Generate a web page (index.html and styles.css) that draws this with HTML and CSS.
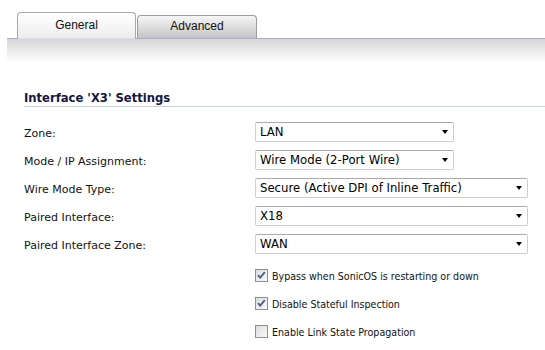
FILE: index.html
```html
<!DOCTYPE html>
<html>
<head>
<meta charset="utf-8">
<link rel="stylesheet" href="styles.css">
</head>
<body>
<div class="tabbar">
  <div class="tab active">General</div>
  <div class="tab">Advanced</div>
</div>
<div class="band"></div>
<div class="section">
  <div class="heading">Interface 'X3' Settings</div>
  <div class="form">
    <div class="label">Zone:</div>
    <div class="select narrow"><span>LAN</span><i class="arrow"></i></div>
    <div class="label">Mode / IP Assignment:</div>
    <div class="select narrow"><span>Wire Mode (2-Port Wire)</span><i class="arrow"></i></div>
    <div class="label">Wire Mode Type:</div>
    <div class="select wide"><span>Secure (Active DPI of Inline Traffic)</span><i class="arrow"></i></div>
    <div class="label">Paired Interface:</div>
    <div class="select wide"><span>X18</span><i class="arrow"></i></div>
    <div class="label">Paired Interface Zone:</div>
    <div class="select wide"><span>WAN</span><i class="arrow"></i></div>
  </div>
  <div class="checks">
    <label class="check">
      <svg class="box" width="13" height="13" viewBox="0 0 13 13"><defs><linearGradient id="g" x1="0" y1="0" x2="1" y2="1"><stop offset="0" stop-color="#dcdcdc"/><stop offset="1" stop-color="#fbfbfb"/></linearGradient></defs><rect x="0.5" y="0.5" width="12" height="12" fill="url(#g)" stroke="#8e8f8f"/><path d="M3 6.2 L5.2 8.6 L9.8 3.2" fill="none" stroke="#4d5a8c" stroke-width="1.8"/></svg>
      <span>Bypass when SonicOS is restarting or down</span>
    </label>
    <label class="check">
      <svg class="box" width="13" height="13" viewBox="0 0 13 13"><rect x="0.5" y="0.5" width="12" height="12" fill="url(#g)" stroke="#8e8f8f"/><path d="M3 6.2 L5.2 8.6 L9.8 3.2" fill="none" stroke="#4d5a8c" stroke-width="1.8"/></svg>
      <span>Disable Stateful Inspection</span>
    </label>
    <label class="check">
      <svg class="box" width="13" height="13" viewBox="0 0 13 13"><rect x="0.5" y="0.5" width="12" height="12" fill="url(#g)" stroke="#8e8f8f"/></svg>
      <span>Enable Link State Propagation</span>
    </label>
  </div>
</div>
</body>
</html>
```
FILE: styles.css
```css
html, body {
  margin: 0;
  padding: 0;
  background: #fff;
}
body {
  font-family: "DejaVu Sans", Verdana, sans-serif;
  font-size: 11px;
  color: #000;
  width: 545px;
  overflow: hidden;
}
.tabbar {
  display: flex;
  align-items: flex-end;
  margin-left: 7px;
  padding-left: 10px;
  padding-top: 12px;
  height: 26px;
  border-bottom: 1px solid #b2acc6;
}
.tab {
  box-sizing: border-box;
  font-family: "Liberation Sans", Arial, sans-serif;
  font-size: 12px;
  text-align: center;
  border: 1px solid #9d9d9d;
  border-bottom: none;
  border-radius: 4px 4px 0 0;
  width: 120px;
  height: 23px;
  line-height: 20px;
  margin-left: 1px;
  background: linear-gradient(#f6f6f6, #c4c4c4);
  color: #111;
}
.tab.active {
  width: 119px;
  height: 27px;
  margin-left: 0;
  margin-bottom: -1px;
  line-height: 24px;
  border-color: #a8a8a8;
  background: linear-gradient(#ffffff, #ececec);
  box-shadow: inset 0 -1px 0 #dadcf0;
}
.band {
  margin-left: 7px;
  height: 24px;
  background: linear-gradient(#d6d6d6, #ffffff);
}
.section {
  padding-left: 24px;
  padding-top: 28px;
}
.heading {
  font-weight: bold;
  font-size: 11.6px;
  color: #16163f;
  line-height: 14px;
  padding-bottom: 1px;
  border-bottom: 1px solid #cbd2dd;
}
.form {
  display: grid;
  grid-template-columns: 231px auto;
  grid-auto-rows: 20px;
  row-gap: 8px;
  margin-top: 15px;
  align-items: center;
}
.label {
  line-height: 20px;
  padding-top: 3px;
  color: #111;
}
.select {
  box-sizing: border-box;
  height: 20px;
  display: flex;
  align-items: center;
  justify-content: space-between;
  border: 1px solid #cfcfcf;
  border-top-color: #aaaaaa;
  border-radius: 2px;
  padding: 0 4px 0 4px;
  background: #fff;
  font-size: 11.7px;
}
.select.narrow { width: 199px; }
.select.wide { width: 273px; }
.select span { white-space: nowrap; }
.arrow {
  width: 0;
  height: 0;
  border-left: 3.5px solid transparent;
  border-right: 3.5px solid transparent;
  border-top: 4px solid #000;
  margin-right: 1px;
}
.checks {
  margin-top: 15px;
  margin-left: 231px;
  display: flex;
  flex-direction: column;
  gap: 15px;
}
.check {
  display: flex;
  align-items: center;
  height: 13px;
  gap: 4px;
  color: #111;
  font-family: "DejaVu Sans Condensed", "DejaVu Sans", sans-serif;
  font-stretch: condensed;
  font-size: 10.6px;
}
.box { flex: none; }
```
